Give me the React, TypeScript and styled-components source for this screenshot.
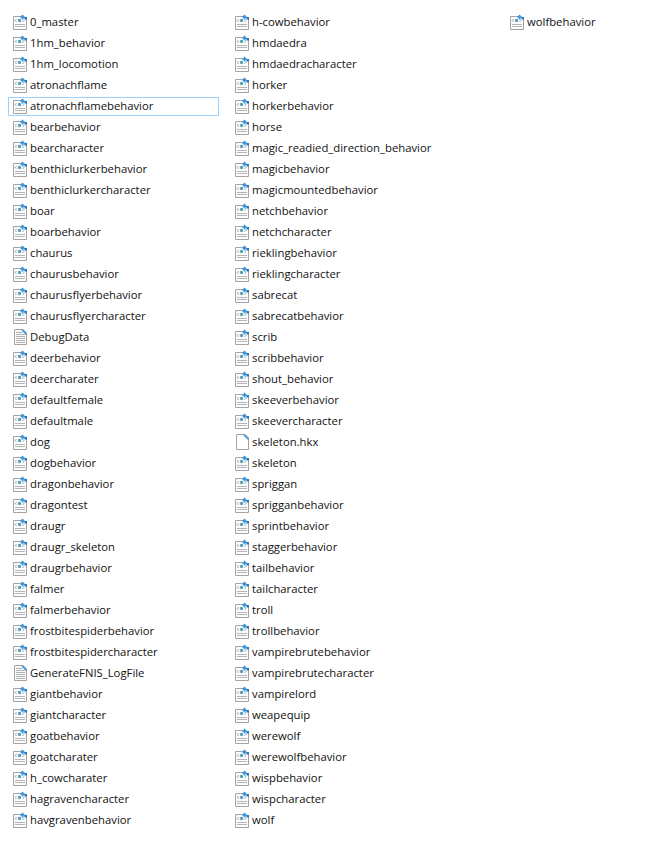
import React from "react";
import styled, { createGlobalStyle } from "styled-components";

type FileKind = "xml" | "text" | "blank";

interface IFile {
  name: string;
  kind?: FileKind;
  selected?: boolean;
}

const GlobalStyle = createGlobalStyle`
  html, body {
    margin: 0;
    padding: 0;
    background: #fff;
  }
`;

const Listing = styled.div`
  display: grid;
  grid-auto-flow: column;
  grid-template-rows: repeat(39, 21px);
  grid-template-columns: 222px 275px 150px;
  padding: 13px 0 0 8px;
  width: 665px;
  height: 842px;
  box-sizing: border-box;
  overflow: hidden;
  font-family: "Open Sans", "Noto Sans", sans-serif;
  font-size: 11.3px;
  color: #111;
`;

const Row = styled.div<{ $selected?: boolean }>`
  display: flex;
  align-items: center;
  gap: 1px;
  height: 19px;
  width: ${(p) => (p.$selected ? "211px" : "auto")};
  padding: 0 0 2px 4px;
  box-sizing: border-box;
  border: 1px solid ${(p) => (p.$selected ? "#99d1ff" : "transparent")};
`;

const Name = styled.span`
  white-space: nowrap;
`;

function XmlIcon() {
  return (
    <svg width="16" height="16" viewBox="0 0 16 16" fill="none">
      <path d="M0.5 2.5H9L13.5 4.5V15.5H0.5Z" fill="#fdfdfd" stroke="#a3a3a3" />
      <path d="M2 10.5H12M2 12.5H12" stroke="#b4b4b4" />
      <path d="M3.5 5L2.2 6.5L3.5 8M9.5 5L10.8 6.5L9.5 8" stroke="#8aa9bb" />
      <circle cx="6.5" cy="6.5" r="1.7" fill="#4b93b8" />
      <circle cx="5.9" cy="7" r="0.8" fill="#8cc4ab" />
      <path d="M9.5 0.5L12 3L9.5 5.5L7 3Z" fill="#3f97dd" />
      <rect x="11.5" y="3" width="2.5" height="2.5" fill="#2a76b8" />
    </svg>
  );
}

function TextIcon() {
  return (
    <svg width="16" height="16" viewBox="0 0 16 16" fill="none">
      <path d="M1.5 0.5H10L13.5 4V15.5H1.5Z" fill="#fbfbfb" stroke="#a3a3a3" />
      <path d="M3 3.5H9M3 5.5H12M3 7.5H12M3 9.5H12M3 11.5H12M3 13.5H12" stroke="#b0b0b0" />
      <path d="M9.5 0L14 4.5L13 6L8.5 1.5Z" fill="#3f97dd" />
    </svg>
  );
}

function BlankIcon() {
  return (
    <svg width="16" height="16" viewBox="0 0 16 16" fill="none">
      <path d="M1.5 0.5H10L13.5 4V15.5H1.5Z" fill="#fff" stroke="#a3a3a3" />
      <path d="M9.5 0L14 4.5L13 6L8.5 1.5Z" fill="#3f97dd" />
    </svg>
  );
}

const icons: Record<FileKind, () => React.JSX.Element> = {
  xml: XmlIcon,
  text: TextIcon,
  blank: BlankIcon,
};

const files: IFile[] = [
  { name: "0_master" },
  { name: "1hm_behavior" },
  { name: "1hm_locomotion" },
  { name: "atronachflame" },
  { name: "atronachflamebehavior", selected: true },
  { name: "bearbehavior" },
  { name: "bearcharacter" },
  { name: "benthiclurkerbehavior" },
  { name: "benthiclurkercharacter" },
  { name: "boar" },
  { name: "boarbehavior" },
  { name: "chaurus" },
  { name: "chaurusbehavior" },
  { name: "chaurusflyerbehavior" },
  { name: "chaurusflyercharacter" },
  { name: "DebugData", kind: "text" },
  { name: "deerbehavior" },
  { name: "deercharater" },
  { name: "defaultfemale" },
  { name: "defaultmale" },
  { name: "dog" },
  { name: "dogbehavior" },
  { name: "dragonbehavior" },
  { name: "dragontest" },
  { name: "draugr" },
  { name: "draugr_skeleton" },
  { name: "draugrbehavior" },
  { name: "falmer" },
  { name: "falmerbehavior" },
  { name: "frostbitespiderbehavior" },
  { name: "frostbitespidercharacter" },
  { name: "GenerateFNIS_LogFile", kind: "text" },
  { name: "giantbehavior" },
  { name: "giantcharacter" },
  { name: "goatbehavior" },
  { name: "goatcharater" },
  { name: "h_cowcharater" },
  { name: "hagravencharacter" },
  { name: "havgravenbehavior" },
  { name: "h-cowbehavior" },
  { name: "hmdaedra" },
  { name: "hmdaedracharacter" },
  { name: "horker" },
  { name: "horkerbehavior" },
  { name: "horse" },
  { name: "magic_readied_direction_behavior" },
  { name: "magicbehavior" },
  { name: "magicmountedbehavior" },
  { name: "netchbehavior" },
  { name: "netchcharacter" },
  { name: "rieklingbehavior" },
  { name: "rieklingcharacter" },
  { name: "sabrecat" },
  { name: "sabrecatbehavior" },
  { name: "scrib" },
  { name: "scribbehavior" },
  { name: "shout_behavior" },
  { name: "skeeverbehavior" },
  { name: "skeevercharacter" },
  { name: "skeleton.hkx", kind: "blank" },
  { name: "skeleton" },
  { name: "spriggan" },
  { name: "sprigganbehavior" },
  { name: "sprintbehavior" },
  { name: "staggerbehavior" },
  { name: "tailbehavior" },
  { name: "tailcharacter" },
  { name: "troll" },
  { name: "trollbehavior" },
  { name: "vampirebrutebehavior" },
  { name: "vampirebrutecharacter" },
  { name: "vampirelord" },
  { name: "weapequip" },
  { name: "werewolf" },
  { name: "werewolfbehavior" },
  { name: "wispbehavior" },
  { name: "wispcharacter" },
  { name: "wolf" },
  { name: "wolfbehavior" },
];

export default function App() {
  return (
    <>
      <GlobalStyle />
      <Listing>
        {files.map((file) => {
          const Icon = icons[file.kind ?? "xml"];
          return (
            <Row key={file.name} $selected={file.selected}>
              <Icon />
              <Name>{file.name}</Name>
            </Row>
          );
        })}
      </Listing>
    </>
  );
}
